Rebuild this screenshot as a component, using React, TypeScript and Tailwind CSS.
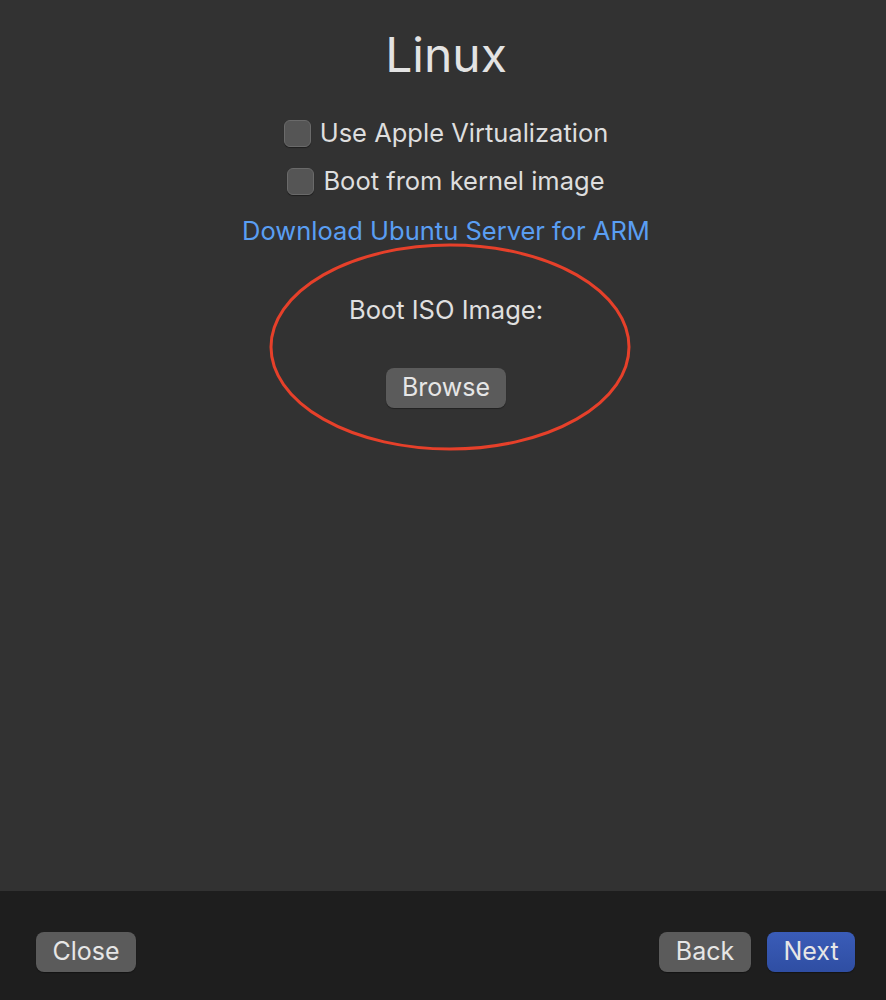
import React from 'react';

const font = { fontFamily: 'Inter, "Noto Sans", sans-serif' };

function Check({ label }: { label: string }) {
  return (
    <label className="flex items-center gap-[9px] h-[28px]">
      <span className="w-[27px] h-[27px] rounded-[6px] bg-[#555555] border border-[#6a6a6a] shadow-[0_1px_1px_rgba(0,0,0,0.4)]" />
      <span className="text-[25.5px] text-[#dedede]">{label}</span>
    </label>
  );
}

function MacButton({ children, primary, className = '' }: { children: React.ReactNode; primary?: boolean; className?: string }) {
  return (
    <button
      className={
        'h-[40px] rounded-[8px] text-[25px] text-[#e6e6e6] shadow-[0_1px_1px_rgba(0,0,0,0.35)] ' +
        (primary ? 'bg-gradient-to-b from-[#3a5cb8] to-[#2f4ea3] ' : 'bg-[#5b5b5b] ') +
        className
      }
    >
      {children}
    </button>
  );
}

export default function App() {
  return (
    <div className="flex flex-col w-[886px] h-[1000px] bg-[#323232]" style={font}>
      <main className="relative flex-1 flex flex-col items-center pl-[6px]">
        <h1 className="mt-[25px] text-[48px] leading-[60px] text-[#e3e3e3]">Linux</h1>
        <div className="mt-[34px] flex flex-col items-center gap-[20px]">
          <Check label="Use Apple Virtualization" />
          <Check label="Boot from kernel image" />
        </div>
        <a className="mt-[20px] text-[25.5px] leading-[32px] text-[#5a9ef2]">Download Ubuntu Server for ARM</a>
        <p className="mt-[48px] text-[25.5px] leading-[30px] text-[#e0e0e0]">Boot ISO Image:</p>
        <MacButton className="mt-[43px] w-[120px]">Browse</MacButton>
        <svg className="absolute left-[268px] top-[243px]" width="364" height="210" viewBox="0 0 364 210">
          <ellipse cx="182" cy="104" rx="179" ry="102" fill="none" stroke="#e6402a" strokeWidth="3" />
        </svg>
      </main>
      <footer className="h-[109px] bg-[#1e1e1e] flex items-center justify-between pl-[36px] pr-[31px] pt-[13px]">
        <MacButton className="w-[100px]">Close</MacButton>
        <div className="flex gap-[16px]">
          <MacButton className="w-[92px]">Back</MacButton>
          <MacButton primary className="w-[88px]">Next</MacButton>
        </div>
      </footer>
    </div>
  );
}
